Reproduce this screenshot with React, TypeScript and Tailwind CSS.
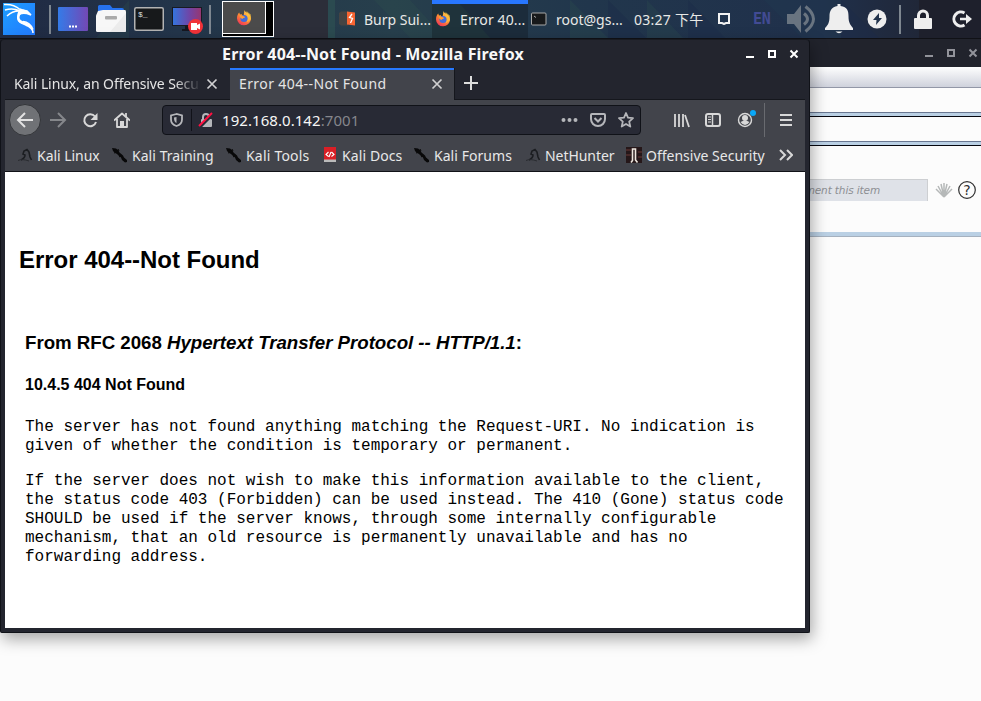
import type { ReactNode } from "react";

const ui = "font-['Noto_Sans','Noto_Sans_CJK_SC',sans-serif]";

type IconProps = { w: number; h: number; className?: string; children: ReactNode };

function Icon({ w, h, className = "", children }: IconProps) {
  return (
    <svg width={w} height={h} viewBox={`0 0 ${w} ${h}`} fill="none" className={`block shrink-0 ${className}`}>
      {children}
    </svg>
  );
}

function Controls({ color, className = "" }: { color: string; className?: string }) {
  return (
    <Icon w={54} h={12} className={className}>
      <path d="M1 9h8" stroke={color} strokeWidth="2" />
      <rect x="24" y="3" width="6" height="6" stroke={color} strokeWidth="2" />
      <path d="M45.500 2.500l7 7m0-7l-7 7" stroke={color} strokeWidth="2" />
    </Icon>
  );
}

function Firefox({ className = "" }: { className?: string }) {
  return (
    <Icon w={16} h={16} className={className}>
      <defs>
        <linearGradient id="ff" x1="13" y1="1" x2="4" y2="15" gradientUnits="userSpaceOnUse">
          <stop stopColor="#ffd64c" />
          <stop offset=".5" stopColor="#ff8a32" />
          <stop offset="1" stopColor="#f0325a" />
        </linearGradient>
      </defs>
      <path d="M8.500 0c.4 1.500 1.500 2 2.600 2.800 1.300.5 3.600 2.400 3.900 5.400A7 7 0 0 1 1 8.500C1 6 1.600 4 3.200 2.400L4 4.500l2-.6c-.7 1.300.1 1.900 1.600 2.200z" fill="url(#ff)" />
      <path d="M10.500 1l4.300 3.500.2 5-4.200 3z" fill="#ffc43c" opacity=".65" />
      <circle cx="8" cy="8.500" r="3.600" fill="#426bd8" />
      <path d="M3.500 5.500c1.500-.7 3-.4 4.200.8l1.500.7c-.8 1.200-2.200.8-2.700 2-1.500-.3-2.600-1.500-3-3.500z" fill="#ff9b31" />
    </Icon>
  );
}

function TopBar() {
  return (
    <header className={`relative flex h-[39px] w-full shrink-0 items-center overflow-hidden border-b border-[#101116] bg-[#22344a] text-[14px] text-[#e8e8e6] ${ui}`}>
      <svg width="981" height="39" className="absolute inset-0">
        <defs>
          <linearGradient id="wall">
            <stop stopColor="#202a43" />
            <stop offset=".18" stopColor="#23354a" />
            <stop offset=".4" stopColor="#273f4c" />
            <stop offset=".6" stopColor="#21364c" />
            <stop offset=".84" stopColor="#20304b" />
            <stop offset="1" stopColor="#20212c" />
          </linearGradient>
        </defs>
        <path d="M0 0h981v39H0z" fill="url(#wall)" />
        <path d="M95 39l34-39v39zM374 0h36l22 24v15h-21zM570 0l39 39h-39zM647 0l37 39h-37z" fill="#345852" opacity=".2" />
        <path d="M328 0h7v39h-7z" fill="#2b4a50" />
        <path d="M764 0h77v39h-38z" fill="#21394f" opacity=".4" />
        <path d="M608 0l39 39h-39zM688 0l38 39h-38zM841 0l39 39h-39z" fill="#1c2a48" opacity=".4" />
        <path d="M919 0h62v39h-62z" fill="#1e202c" />
        <path d="M274 0h54v39h-54z" fill="#2c2e39" />
        <path d="M432 0h96v39h-96z" fill="#1c2c3b" />
        <path d="M432 4h28l31 35h-59z" fill="#1f333b" />
        <path d="M432 0h96v4h-96z" fill="#2877ff" />
      </svg>
      <div className="relative flex h-full w-full items-center">
        <Icon w={32} h={32} className="ml-[3px]">
          <defs><linearGradient id="kali" y2="1"><stop stopColor="#1d9eff" /><stop offset="1" stopColor="#237aff" /></linearGradient></defs>
          <path d="M0 0h32v32H0z" fill="url(#kali)" />
          <path d="M1 1.500c6-.5 11 .5 16 5M2 7c5-1.500 10-1.500 15 1M4 13c3-3 7-5 12-5M17 6c3 1 4 2 7 2l4 4-4-1.500c-6-1-9 .5-9 4.500 0 5 6 5 10 7 3 2 5 4 5 8M20 18.500c5 .5 8 3 10 8" stroke="#fff" strokeWidth="1.500" />
          <path d="M16 7c3-1 6-.5 8 .5l4 4-3.500-1.200c-5-.8-8 .7-8 4.200 0 4 7 4 11 8 2 2 2.500 4 2.500 7.500-2-5-5-6-9-8-5-2-7-4-7-8 0-3 1-5 2-7z" fill="#fff" />
        </Icon>
        <i className="ml-[14px] h-[29px] w-[2px] bg-[#7e8790]" />
        <Icon w={30} h={24} className="ml-[7px]">
          <defs><linearGradient id="desk"><stop stopColor="#347be8" /><stop offset="1" stopColor="#7348b5" /></linearGradient></defs>
          <rect width="30" height="24" rx="1" fill="url(#desk)" />
          <path d="M11 19.500h2m1 0h2m1 0h2" stroke="#fff" strokeWidth="2" />
        </Icon>
        <Icon w={30} h={28} className="ml-[8px]">
          <path d="M2 1.500q0-1.500 1.500-1.500H14l2.500 3H26q2 0 2 2v8H2z" fill="#2672ef" />
          <path d="M0 10.500L2 6l5-1h22q1 0 1 2v18.500q0 1.500-1.500 1.500h-27Q0 27 0 25.500z" fill="#f7f7f7" />
          <path d="M30 8v17.500q0 1.500-1.500 1.500H14z" fill="#ececec" />
          <rect x="9" y="11" width="12" height="3.500" rx="1" fill="#aaa" />
        </Icon>
        <Icon w={30} h={24} className="ml-[8px]">
          <rect x=".75" y=".75" width="28.500" height="22.500" rx="1.500" fill="#17191b" stroke="#b3b3b3" strokeWidth="1.500" />
          <text x="4" y="10" fontSize="8" fill="#ddd" fontFamily="Liberation Mono">$_</text>
        </Icon>
        <Icon w={32} h={29} className="mt-[3px] ml-[8px]">
          <defs><linearGradient id="rec"><stop stopColor="#3376df" /><stop offset=".6" stopColor="#7244a5" /><stop offset="1" stopColor="#97366f" /></linearGradient></defs>
          <rect x=".5" y="1.500" width="29" height="18" fill="url(#rec)" stroke="#181a21" />
          <path d="M13 20h7v3h-7zM10 23h10v2H10z" fill="#151720" />
          <circle cx="23.500" cy="20.500" r="7.500" fill="#f13238" />
          <path d="M19 17h6v2l3-1.500v6L25 22v2h-6z" fill="#fff" />
        </Icon>
        <i className="ml-[5px] h-[29px] w-[2px] bg-[#7e8790]" />
        <div className="ml-[11px] flex h-[36px] w-[52px] items-start border border-white bg-black">
          <div className="flex h-[32px] w-[43px] items-center justify-center border-r border-b border-white bg-[#4b4b4b]"><Firefox /></div>
        </div>
        <Icon w={17} h={16} className="ml-[65px]">
          <path d="M0 2l2-1.500h7v14H2L0 13z" fill="#454443" />
          <path d="M8 .5l8 1v13l-8-1z" fill="#f76532" />
          <path d="M13 3l-2.500 3.500 3 1L11.500 12" stroke="#fff" strokeWidth="1.300" />
        </Icon>
        <span className="ml-[8px] w-[68px] shrink-0 whitespace-nowrap">Burp Sui...</span>
        <Firefox className="ml-[3px]" />
        <span className="ml-[9px] w-[67px] shrink-0 tracking-[0.1px] whitespace-nowrap">Error 40...</span>
        <Icon w={16} h={14} className="ml-[4px]"><rect x=".5" y="1" width="14.500" height="12" rx="1" fill="#17191b" stroke="#a8a8a8" /><path d="M3 4l2 1.500" stroke="#aaa" /></Icon>
        <span className="ml-[9px] w-[68px] shrink-0 whitespace-nowrap">root@gs...</span>
        <span className="ml-[10px] w-[72px] shrink-0 tracking-[0.25px] whitespace-nowrap">03:27 下午</span>
        <Icon w={14} h={12} className="ml-[11px]"><path d="M2 1h10v9H9l-2 1-2-1H2z" stroke="#f2f2f2" strokeWidth="2" /></Icon>
        <span className="ml-[22px] w-[20px] shrink-0 font-['DejaVu_Sans_Mono'] text-[15px] font-bold tracking-[-0.2px] text-[#424b94]">EN</span>
        <Icon w={30} h={30} className="ml-[14px]">
          <path d="M0 10h7l7-9v28l-7-9H0z" fill="#697480" />
          <path d="M17 9.500q7 5.500 0 11M18.500 2.500q16 12.500 0 25" stroke="#697480" strokeWidth="3" />
        </Icon>
        <Icon w={28} h={30} className="ml-[8px]"><path d="M12.500 0h3v2c7 1 8 5 8 10 0 7 2 9 4.500 12v2H0v-2c3-3 4.500-5 4.500-12 0-5 2-9 8-10zM10.500 27.500h7q-3.500 3.500-7 0" fill="#eee" /></Icon>
        <Icon w={20} h={20} className="ml-[14px]"><circle cx="10" cy="10" r="9.500" fill="#eee" /><path d="M12 4l-6 7h3.500L9 16l6-7h-3z" fill="#22334c" /></Icon>
        <i className="ml-[12px] h-[29px] w-[2px] bg-[#7e8790]" />
        <Icon w={18} h={20} className="ml-[13px]"><path d="M4.500 10V6.500a4.500 4.500 0 0 1 9 0V10" stroke="#eee" strokeWidth="3" /><rect y="9" width="18" height="11" rx="1" fill="#eee" /></Icon>
        <Icon w={20} h={18} className="ml-[20px]"><path d="M12.500 3A7 7 0 1 0 12.500 15" stroke="#eee" strokeWidth="3" /><path d="M8 9h7" stroke="#eee" strokeWidth="2.500" /><path d="M14 4l6 5-6 5z" fill="#eee" /></Icon>
      </div>
    </header>
  );
}

function BackgroundWindow() {
  return (
    <section className="flex min-h-0 w-full grow flex-col bg-[#fcfcfc]">
      <div className="flex h-[28px] shrink-0 justify-end bg-[#21232c] pt-[8px]"><Controls color="#92939a" className="mr-[3px]" /></div>
      <div className="h-[21px] shrink-0 border-b border-[#9297a7] bg-linear-to-b from-[#fefefe] to-[#cfd2dc]" />
      <div className="h-[24px] shrink-0" />
      <div className="h-[5px] shrink-0 border-t border-b border-t-[#697791] border-b-[#05060e] bg-[#bad0e4]" />
      <div className="h-[24px] shrink-0" />
      <div className="h-[5px] shrink-0 border-t border-b border-t-[#697791] border-b-[#05060e] bg-[#bad0e4]" />
      <div className="flex h-[86px] shrink-0 items-start justify-end pt-[33px]">
        <div className="h-[22px] w-[140px] border-t border-r border-[#cdcfd2] bg-[#dfe2e8] pt-[3px] pr-[47px] text-right font-['DejaVu_Sans'] text-[10.500px] tracking-[-0.12px] whitespace-nowrap text-[#8d8f93] italic">ment this item</div>
        <Icon w={18} h={15} className="mt-[4px] ml-[7px]"><path d="M9 14L1 6m8 8L3 3m6 11L6 1m3 13V0m0 14l3-13M9 14l6-11M9 14l8-8" stroke="#b5b8b8" strokeWidth="1.500" /></Icon>
        <Icon w={18} h={18} className="mt-[2px] mr-[5px] ml-[5px]"><circle cx="9" cy="9" r="8.300" stroke="#303030" strokeWidth="1.200" /><text x="9" y="14" textAnchor="middle" fontSize="14" fontFamily="DejaVu Sans" fill="#303030">?</text></Icon>
      </div>
      <div className="h-[5px] shrink-0 border-b border-[#a5b1bf] bg-[#bad0e4]" />
    </section>
  );
}

function Knife() {
  return <Icon w={16} h={16}><path d="M0 1l4 .5 2.500 2 1 2 3.500 3 1 2 3 2.500v2l-2 .5-3-2.500-1-2.500-2-1.500-2-2L3 6 1 4z" fill="#080809" /><path d="M2 6l3-1M7 10l3-2M6 2l1 2" stroke="#090909" /></Icon>;
}

function Dragon() {
  return <Icon w={16} h={16} className="opacity-85"><path d="M4 13q4-2 4-5L6 7l1-3 3-1.500L12 5l1 5 1.500 3" stroke="#15171a" strokeWidth="1.600" /><path d="M1 13.500q4-2 11 .5" stroke="#25272b" /></Icon>;
}

function Bookmark({ icon, label, className }: { icon: ReactNode; label: string; className: string }) {
  return (
    <div className={`flex shrink-0 items-center gap-[4px] whitespace-nowrap ${className}`}>
      {icon}
      <span>{label}</span>
    </div>
  );
}

function FirefoxWindow() {
  return (
    <section className="absolute top-[39px] left-0 flex h-[594px] w-[810px] flex-col rounded-t-[4px] rounded-b-[2px] border border-[#101218] border-t-[#181a20] bg-[#23252e] px-[4px] pb-[4px] shadow-[2px_6px_16px_rgba(0,0,0,0.35)]">
      <div className={`flex h-[28px] shrink-0 items-center text-[16px] font-bold text-[#f8f8f8] ${ui}`}>
        <h1 className="ml-[217px] w-[500px] tracking-[0.18px] whitespace-nowrap">Error 404--Not Found - Mozilla Firefox</h1>
        <Controls color="#fff" className="-mt-[1px] ml-[23px]" />
      </div>
      <div className={`flex h-[32px] shrink-0 text-[14px] text-[#e5e5e5] ${ui}`}>
        <div className="flex w-[225px] items-center border-b border-[#15171d] pl-[9px]">
          <span className="w-[187px] mask-r-from-86% mask-r-to-100% tracking-[-0.1px] whitespace-nowrap">Kali Linux, an Offensive Secu</span>
          <Icon w={12} h={12} className="ml-[5px]"><path d="M1.500 1.500l9 9m0-9l-9 9" stroke="#d0d0d1" strokeWidth="1.700" /></Icon>
        </div>
        <div className="flex w-[224px] items-center border-t-2 border-[#2779ff] bg-[#42444b] pb-[3px] pl-[9px]">
          <span className="w-[187px] tracking-[0.4px] whitespace-nowrap">Error 404--Not Found</span>
          <Icon w={12} h={12} className="ml-[5px]"><path d="M1.500 1.500l9 9m0-9l-9 9" stroke="#d0d0d1" strokeWidth="1.700" /></Icon>
        </div>
        <div className="grow border-b border-l border-[#15171d] pt-[8px] pl-[9px]"><Icon w={14} h={14}><path d="M0 7h14M7 0v14" stroke="#ddd" strokeWidth="2" /></Icon></div>
      </div>
      <div className="flex h-[41px] shrink-0 items-center bg-[#42444b] pb-[1px]">
        <div className="ml-[4px] flex size-[32px] items-center justify-center rounded-full border border-[#333539] bg-[#707276]">
          <Icon w={18} h={18}><path d="M17 9H2m7-7L2 9l7 7" stroke="#e2e2e2" strokeWidth="2" /></Icon>
        </div>
        <Icon w={18} h={18} className="ml-[8px]"><path d="M1 9h15M9 2l7 7-7 7" stroke="#85878b" strokeWidth="2" /></Icon>
        <Icon w={16} h={16} className="ml-[15px]"><path d="M13 4.500A6 6 0 1 0 14 10" stroke="#d8d8d8" strokeWidth="2" /><path d="M15.500 1v7h-7z" fill="#d8d8d8" /></Icon>
        <Icon w={16} h={16} className="ml-[16px]"><path d="M0 8.500l8-7 8 7M3 7v8h10V7" stroke="#d8d8d8" strokeWidth="1.800" strokeLinejoin="round" /><path d="M12 1v4" stroke="#d8d8d8" strokeWidth="1.800" /><path d="M6 9h4v5H6z" fill="#d8d8d8" /></Icon>
        <div className={`ml-[32px] flex h-[30px] w-[479px] items-center rounded-[4px] border border-[#101218] bg-[#282a35] text-[14px] ${ui}`}>
          <Icon w={13} h={14} className="ml-[7px]"><path d="M6.500 1L1 2.500v4C1 10 3 12 6.500 13 10 12 12 10 12 6.500v-4z" stroke="#b5b6ba" strokeWidth="1.800" /><path d="M6.500 4v6C4.500 9 4 7.500 4 4.500z" fill="#b5b6ba" /></Icon>
          <i className="ml-[8px] h-[22px] w-px bg-[#111219]" />
          <Icon w={16} h={16} className="ml-[6px]"><path d="M5 8V5a3 3 0 0 1 6 0v3" stroke="#b5b6ba" strokeWidth="2" /><rect x="3" y="7" width="11" height="8" rx="1" fill="#b5b6ba" /><path d="M2 15L15 2" stroke="#282a35" strokeWidth="3" /><path d="M1 14L14 1" stroke="#ff1040" strokeWidth="2" /></Icon>
          <span className="ml-[8px] w-[339px] text-[15px] tracking-[0.06px] text-[#f6f6f6]">192.168.0.142<span className="text-[#85868c]">:7001</span></span>
          <Icon w={18} h={6}><path d="M.5 3a2 2 0 1 0 4 0a2 2 0 1 0-4 0m6 0a2 2 0 1 0 4 0a2 2 0 1 0-4 0m6 0a2 2 0 1 0 4 0a2 2 0 1 0-4 0" fill="#b5b6ba" /></Icon>
          <Icon w={16} h={15} className="ml-[11px]"><path d="M2 1h12q1 0 1 1v4a7 7 0 0 1-14 0V2q0-1 1-1zM4.500 5L8 8.500 11.500 5" stroke="#b5b6ba" strokeWidth="2" /></Icon>
          <Icon w={16} h={16} className="ml-[12px]"><path d="M8 1l2 4.700 5 .5-3.800 3.400 1.100 5L8 12l-4.300 2.600 1.100-5L1 6.200l5-.5z" stroke="#b5b6ba" strokeWidth="1.800" strokeLinejoin="round" /></Icon>
        </div>
        <Icon w={16} h={15} className="ml-[33px]"><path d="M1 1v13M5 1v13M9 1v13M11 2l4 12" stroke="#d8d8d8" strokeWidth="1.800" /></Icon>
        <Icon w={16} h={14} className="ml-[15px]"><rect x="1" y="1" width="14" height="12" rx="2" stroke="#d8d8d8" strokeWidth="2" /><path d="M7.500 1v12" stroke="#d8d8d8" strokeWidth="1.500" /><path d="M3 4h3M3 6.500h3M3 9h3" stroke="#d8d8d8" /></Icon>
        <Icon w={20} h={20} className="ml-[16px]">
          <circle cx="8" cy="10" r="6.500" stroke="#d8d8d8" strokeWidth="1.400" /><circle cx="8" cy="8" r="3" fill="#d8d8d8" /><path d="M3.500 12q4.500-3 9 0-2 3-4.500 3t-4.500-3z" fill="#d8d8d8" /><circle cx="16" cy="3" r="3" fill="#09a8f8" />
        </Icon>
        <i className="ml-[7px] h-[34px] w-px bg-[#696b70]" />
        <Icon w={12} h={14} className="ml-[15px]"><path d="M0 2h12M0 7h12M0 12h12" stroke="#d8d8d8" strokeWidth="2" /></Icon>
      </div>
      <nav className={`flex h-[31px] shrink-0 items-center border-b border-[#111217] bg-[#42444b] pb-[2px] text-[14px] text-[#e8e8e8] ${ui}`}>
        <Bookmark icon={<Dragon />} label="Kali Linux" className="ml-[12px] w-[95px] tracking-[-0.03px]" />
        <Bookmark icon={<Knife />} label="Kali Training" className="w-[114px] tracking-[0.05px]" />
        <Bookmark icon={<Knife />} label="Kali Tools" className="w-[96px] tracking-[0.2px]" />
        <Bookmark icon={<Icon w={16} h={16}><path d="M2 0h12v13H2z" fill="#da1f26" /><path d="M2 12.500h12V15H2z" fill="#bbb" /><path d="M6.500 5L4 7.500l2.500 2m3-4.500L12 7.500l-2.500 2M9 5L7 10" stroke="#fff" strokeWidth="1.100" /></Icon>} label="Kali Docs" className="w-[92px] tracking-[0.1px]" />
        <Bookmark icon={<Knife />} label="Kali Forums" className="w-[111px] tracking-[0.05px]" />
        <Bookmark icon={<Dragon />} label="NetHunter" className="w-[101px] tracking-[-0.05px]" />
        <Bookmark icon={<Icon w={16} h={16}><path d="M0 0h16v16H0z" fill="#251719" /><path d="M0 3h5M0 8h5M12 5h4M12 10h4" stroke="#6a3b39" /><path d="M5 15.500l1.500-2V2h3v11l2 2.500" stroke="#eee7df" strokeWidth="1.600" /></Icon>} label="Offensive Security" className="w-[153px]" />
        <Icon w={14} h={12}><path d="M1 1l5 5-5 5M8 1l5 5-5 5" stroke="#d8d8d8" strokeWidth="2" /></Icon>
      </nav>
      <main className="min-h-0 grow bg-white pt-[74px] pl-[14px] font-['Liberation_Sans'] text-black">
        <h2 className="text-[24px] leading-[27px] font-bold tracking-[-0.03px]">Error 404--Not Found</h2>
        <div className="pl-[6px]">
          <h3 className="mt-[59px] text-[18.720px] leading-[22px] font-bold tracking-[-0.03px]">From RFC 2068 <i>Hypertext Transfer Protocol -- HTTP/1.1</i>:</h3>
          <h4 className="mt-[22px] text-[16px] leading-[18px] font-bold">10.4.5 404 Not Found</h4>
          <div className="mt-[24px] font-['Liberation_Mono'] text-[16px] leading-[19px] whitespace-nowrap">
            <p>The server has not found anything matching the Request-URI. No indication is<br />given of whether the condition is temporary or permanent.</p>
            <p className="mt-[16px]">If the server does not wish to make this information available to the client,<br />the status code 403 (Forbidden) can be used instead. The 410 (Gone) status code<br />SHOULD be used if the server knows, through some internally configurable<br />mechanism, that an old resource is permanently unavailable and has no<br />forwarding address.</p>
          </div>
        </div>
      </main>
    </section>
  );
}

export default function App() {
  return (
    <div className="relative flex h-[701px] w-[981px] flex-col overflow-hidden">
      <TopBar />
      <BackgroundWindow />
      <FirefoxWindow />
    </div>
  );
}
